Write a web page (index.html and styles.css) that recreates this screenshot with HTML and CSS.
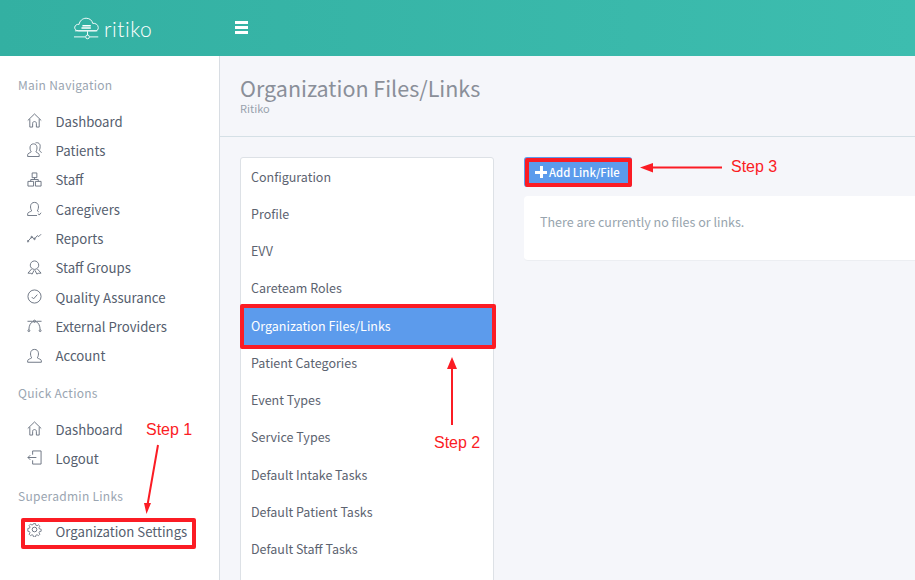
FILE: index.html
```html
<!DOCTYPE html>
<html lang="en">
<head>
<meta charset="utf-8">
<title>Organization Files/Links</title>
<link rel="stylesheet" href="styles.css">
</head>
<body>
<header class="topbar">
  <div class="brand">
    <svg class="logo" width="28" height="23" viewBox="0 0 30 24" fill="none" stroke="#fff" stroke-width="1"><path d="M5 14.5C1.500 14.500 .5 12 .8 10.500 1.200 8.500 3 7.300 5.500 7.500 6 4 9 1 13 1c4 0 6.500 2.500 7 5.500 3-.5 6 1.500 6 4.500 0 2-1 3.500-3 3.500z"/><path d="M1 14.500h24"/><path d="M9 9h9M8 11.500h10" stroke-width="1.500"/><path d="M0 21h12M17 21h9"/><circle cx="14.500" cy="21" r="2"/><path d="M14.500 15v4"/></svg>
    <span class="brand-name">ritiko</span>
  </div>
  <div class="burger"><i></i><i></i><i></i></div>
</header>
<div class="body">
  <aside class="sidebar">
    <h6 class="nav-title">Main Navigation</h6>
    <ul class="nav">
      <li><svg viewBox="0 0 16 16"><path d="M.8 8 8 1 15.200 8M3 6.500V15h3v-4c0-2.500 4-2.500 4 0v4h3V6.500"/></svg>Dashboard</li>
      <li><svg viewBox="0 0 16 16"><path d="M.7 15.500v-2c0-1.500 3-2 3.800-3-2-3-2-8.500 2.500-8.500 4 0 4.500 5 2.500 8.500.8 1 3.500 1.500 3.500 3v2zM9 1c3-1 5.500 1 5 4 0 2-.5 3-1 4 .5.800 2.300 1 2.300 2.500"/></svg>Patients</li>
      <li><svg viewBox="0 0 16 16"><path d="M5.500 1h5v5h-5zM1 10h6v5H1zM9 10h6v5H9zM8 6v2M4 10V8h8v2"/></svg>Staff</li>
      <li><svg viewBox="0 0 16 16"><path d="M.7 15.500v-2c0-1.500 3.300-2 4.300-3-2-3-2-9 3-9s5 6 3 9c.5.500 1 .8 1.500 1M.7 15.500h10M12 13.500l1 1.500 2-2.500"/></svg>Caregivers</li>
      <li><svg viewBox="0 0 16 16"><path d="M1 12 5 7.500 8 9.500 11 6 12.500 7 15 4.500" /><circle cx="1" cy="12" r=".8"/><circle cx="5" cy="7.500" r=".8"/><circle cx="8" cy="9.500" r=".8"/></svg>Reports</li>
      <li><svg viewBox="0 0 16 16"><circle cx="8" cy="5.500" r="4.500"/><path d="M5 9.500 1 14l3 .2L5.500 15l2-4M11 9.500l4 4.500-3 .2-1.500.8-2-4"/></svg>Staff Groups</li>
      <li><svg viewBox="0 0 16 16"><circle cx="8" cy="8" r="7"/><path d="M5 8.500 7 10.500 11 6"/></svg>Quality Assurance</li>
      <li><svg viewBox="0 0 16 16"><path d="M2 12.500C2 8 4 4.500 7 3.500h2c3 1 5 4.500 5 9M.5 3.500H6M10 3.500h5.500"/><circle cx="8" cy="3.500" r="1.200"/><circle cx="2" cy="13.500" r="1"/><circle cx="14" cy="13.500" r="1"/></svg>External Providers</li>
      <li><svg viewBox="0 0 16 16"><path d="M.7 15.200v-1.700c0-1.500 3.300-2 4.300-3-2-3-2-9 3-9s5 6 3 9c1 1 4.300 1.500 4.300 3v1.700z"/></svg>Account</li>
    </ul>
    <h6 class="nav-title">Quick Actions</h6>
    <ul class="nav">
      <li><svg viewBox="0 0 16 16"><path d="M.8 8 8 1 15.200 8M3 6.500V15h3v-4c0-2.500 4-2.500 4 0v4h3V6.500"/></svg>Dashboard</li>
      <li><svg viewBox="0 0 16 16"><path d="M6 5V1h9v14H6v-4M1 8h9M3.500 5.500 1 8l2.500 2.500"/></svg>Logout</li>
    </ul>
    <h6 class="nav-title">Superadmin Links</h6>
    <ul class="nav">
      <li class="nav-gear"><svg viewBox="0 0 16 16"><circle cx="8" cy="8" r="2.500"/><path d="M6.800 1h2.400l.4 2 1.400.6 1.700-1.100 1.700 1.700-1.100 1.700.6 1.400 2 .4v2.400l-2 .4-.6 1.400 1.100 1.700-1.700 1.700-1.700-1.100-1.400.6-.4 2H6.800l-.4-2-1.400-.6-1.700 1.100-1.700-1.700 1.100-1.700-.6-1.400-2-.4V6.800l2-.4.6-1.400-1.100-1.700 1.700-1.700 1.700 1.100 1.400-.6z" transform="translate(.8 .8) scale(.9)"/></svg>Organization Settings</li>
    </ul>
  </aside>
  <main class="main">
    <div class="page-head">
      <h1>Organization Files/Links</h1>
      <p>Ritiko</p>
    </div>
    <div class="content">
      <ul class="settings">
        <li>Configuration</li>
        <li>Profile</li>
        <li>EVV</li>
        <li>Careteam Roles</li>
        <li class="active">Organization Files/Links</li>
        <li>Patient Categories</li>
        <li>Event Types</li>
        <li>Service Types</li>
        <li>Default Intake Tasks</li>
        <li>Default Patient Tasks</li>
        <li>Default Staff Tasks</li>
      </ul>
      <section class="files">
        <button class="add-btn"><span class="plus"></span>Add Link/File</button>
        <div class="panel">There are currently no files or links.</div>
      </section>
    </div>
  </main>
</div>

<div class="mark mark-settings"></div>
<div class="mark mark-item"></div>
<div class="mark mark-btn"></div>
<span class="step step-1">Step 1</span>
<span class="step step-2">Step 2</span>
<span class="step step-3">Step 3</span>
<svg class="arrows" width="915" height="580" viewBox="0 0 915 580">
  <path d="M158 445 147.500 505M452 425V367M722 167.500H651"/>
  <path class="head" d="M144 503 151 503 146.500 514zM447 369H457L452 357zM653 163V172.500L640 167.500z"/>
</svg>
</body>
</html>
```
FILE: styles.css
```css
* { box-sizing: border-box; }
html, body { margin: 0; height: 100%; overflow: hidden; }
body {
  width: 915px;
  height: 580px;
  position: relative;
  font-family: "Noto Sans CJK SC", "Noto Sans", sans-serif;
  font-size: 12.500px;
  color: #5c6370;
  background: #f5f6fa;
}
ul { list-style: none; margin: 0; padding: 0; }

.topbar {
  height: 56px;
  background: linear-gradient(to right, #33b0a2, #3dbdaf);
  display: flex;
  align-items: center;
  color: #fff;
}
.brand {
  width: 219px;
  display: flex;
  align-items: flex-end;
  gap: 2px;
  padding-left: 74px;
}
.logo { display: block; }
.brand-name {
  font-family: "Lato", sans-serif;
  font-weight: 300;
  font-size: 21px;
  letter-spacing: .55px;
  line-height: 22px;
}
.burger {
  margin: -2px 0 0 16px;
  display: flex;
  flex-direction: column;
  gap: 2px;
}
.burger i {
  display: block;
  width: 13px;
  height: 3px;
  background: #fff;
}

.body { display: flex; height: 524px; }

.sidebar {
  width: 220px;
  flex: none;
  background: #fff;
  border-right: 1px solid #d8dde3;
  padding: 19px 0 0 18px;
}
.nav-title {
  margin: 0 0 12.500px;
  font-size: 12px;
  font-weight: 400;
  line-height: 19px;
  color: #9aa5b1;
  letter-spacing: .27px;
}
.nav { margin-bottom: 12.500px; }
.nav li {
  height: 29.330px;
  display: flex;
  align-items: center;
  padding-left: 9px;
  font-size: 13.200px;
  color: #555e6e;
  white-space: nowrap;
}
.nav svg {
  width: 15px;
  height: 15px;
  margin-right: 13.500px;
  margin-top: -1px;
  flex: none;
  fill: none;
  stroke: #6a7280;
  stroke-width: 1;
}
.nav .nav-gear svg { margin-top: -4px; }

.main { flex: 1; min-width: 0; }
.page-head {
  height: 81px;
  border-bottom: 1px solid #d5e0e6;
  padding: 18px 20px 0;
}
.page-head h1 {
  margin: 0;
  font-size: 21.500px;
  font-weight: 400;
  line-height: 28px;
  color: #8a8f99;
}
.page-head p {
  margin: 0;
  font-size: 11px;
  line-height: 12px;
  color: #98a2ad;
}
.content {
  display: flex;
  gap: 30px;
  padding: 20px 0 0 20px;
}
.settings {
  width: 254px;
  flex: none;
  height: 440px;
  background: #fff;
  border: 1px solid #dde1e6;
  border-radius: 3px;
  overflow: hidden;
}
.settings li {
  height: 37.250px;
  padding-left: 10px;
  display: flex;
  align-items: center;
  color: #5c6370;
}
.settings li:first-child { margin-top: -.5px; }
.settings li.active {
  background: #5c9bec;
  box-shadow: 0 1px 0 #5c9bec;
  color: #fff;
}
.files { flex: 1; min-width: 0; }
.add-btn {
  display: flex;
  align-items: center;
  gap: 2px;
  width: 108px;
  height: 30px;
  margin: 0;
  padding: 0 0 0 11px;
  border: 0;
  border-radius: 3px;
  background: #5c9bec;
  color: #fff;
  font: 500 11.300px "Noto Sans CJK SC", "Noto Sans", sans-serif;
}
.plus {
  width: 12px;
  height: 12px;
  background:
    linear-gradient(#fff, #fff) center / 12px 3px no-repeat,
    linear-gradient(#fff, #fff) center / 3px 12px no-repeat;
}
.panel {
  margin-top: 9px;
  height: 65px;
  padding: 16px 16px;
  background: #fff;
  border-radius: 4px 0 0 4px;
  border-bottom: 1px solid #eceef2;
  color: #97a4ae;
  line-height: 20px;
}

.mark {
  position: absolute;
  border: 4px solid #fb1c24;
  border-radius: 2px;
}
.mark-settings { left: 21px; top: 518px; width: 175px; height: 31px; }
.mark-item { left: 240px; top: 304px; width: 256px; height: 45px; }
.mark-btn { left: 525px; top: 158px; width: 107px; height: 29px; }

.step {
  position: absolute;
  font-family: "Liberation Sans", Arial, sans-serif;
  font-size: 16px;
  line-height: 18px;
  color: #fb1c24;
  white-space: nowrap;
}
.step-1 { left: 146px; top: 421px; }
.step-2 { left: 434px; top: 434px; }
.step-3 { left: 731px; top: 158px; }

.arrows {
  position: absolute;
  left: 0;
  top: 0;
  pointer-events: none;
  fill: none;
  stroke: #fb1c24;
  stroke-width: 2;
}
.arrows .head { fill: #fb1c24; stroke: none; }
```
